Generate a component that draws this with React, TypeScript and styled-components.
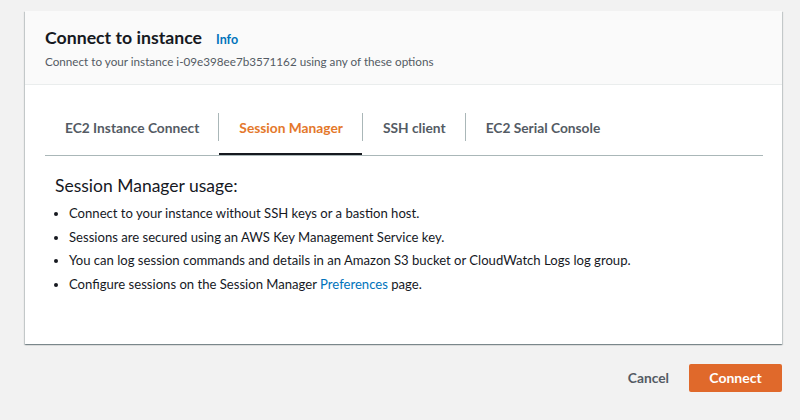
import React from "react"
import styled, { createGlobalStyle } from "styled-components"

const GlobalStyle = createGlobalStyle`
  html, body {
    margin: 0;
    padding: 0;
    background: #f2f2f2;
  }

  body {
    font-family: Lato, "Open Sans", sans-serif;
    color: #16191f;
  }
`

const Page = styled.div`
  width: 800px;
  height: 420px;
  box-sizing: border-box;
  padding: 11px 18px 0 25px;

  display: flex;
  flex-direction: column;
`

const Card = styled.section`
  width: 757px;
  background: #ffffff;
  box-shadow: 0 1px 1px 0 rgba(0, 28, 36, 0.3), 1px 1px 1px 0 rgba(0, 28, 36, 0.15), -1px 1px 1px 0 rgba(0, 28, 36, 0.15);
`

const Header = styled.header`
  height: 74px;
  box-sizing: border-box;
  padding: 16px 20px 0;

  background: #fafafa;
  border-bottom: 1px solid #eaeded;
`

const TitleRow = styled.div`
  display: flex;
  align-items: baseline;
  gap: 14px;
`

const Title = styled.h2`
  margin: 0;

  font-size: 17.7px;
  font-weight: 700;
  line-height: 22px;
`

const InfoLink = styled.a`
  font-size: 12.5px;
  font-weight: 700;
  color: #0073bb;
`

const Subtitle = styled.p`
  margin: 3px 0 0;

  font-size: 11.7px;
  line-height: 18px;
  color: #545b64;
`

const Body = styled.div`
  padding: 14px 19px 47px 20px;
`

const TabList = styled.div`
  display: flex;
  align-items: center;

  border-bottom: 1px solid #aab7b8;
`

const Tab = styled.button<{ $active?: boolean }>`
  height: 56px;
  padding: 0 19px 0 20px;

  border: none;
  background: none;
  box-shadow: ${ props => props.$active ? "inset 0 -2px 0 #16191f" : "none" };

  font-family: inherit;
  font-size: 13.75px;
  font-weight: 700;
  color: ${ props => props.$active ? "#e4782b" : "#545b64" };

  cursor: pointer;
`

const TabDivider = styled.span`
  width: 1px;
  height: 28px;
  background: #aab7b8;
`

const Content = styled.div`
  padding: 19px 10px 0;
`

const UsageTitle = styled.h3`
  margin: 0 0 5px;

  font-size: 17.5px;
  font-weight: 400;
  line-height: 22px;
`

const UsageList = styled.ul`
  margin: 0;
  padding-left: 14px;
`

const UsageItem = styled.li`
  font-size: 13.1px;
  line-height: 23.7px;
`

const Link = styled.a`
  color: #0073bb;
`

const Footer = styled.footer`
  display: flex;
  justify-content: flex-end;
  align-items: center;
  gap: 20px;

  width: 757px;
  margin-top: 20px;
`

const TextButton = styled.button`
  padding: 0;

  border: none;
  background: none;

  font-family: inherit;
  font-size: 13.8px;
  font-weight: 700;
  color: #545b64;
`

const PrimaryButton = styled.button`
  width: 93px;
  height: 28px;

  border: none;
  border-radius: 2px;
  background: #e0692b;

  font-family: inherit;
  font-size: 14px;
  font-weight: 700;
  color: #ffffff;
`

const tabs = ["EC2 Instance Connect", "Session Manager", "SSH client", "EC2 Serial Console"]

const App: React.FC = () => {
  return (
    <Page>
      <GlobalStyle />
      <Card>
        <Header>
          <TitleRow>
            <Title>Connect to instance</Title>
            <InfoLink>Info</InfoLink>
          </TitleRow>
          <Subtitle>Connect to your instance i-09e398ee7b3571162 using any of these options</Subtitle>
        </Header>

        <Body>
          <TabList>
            {tabs.map((label, i) => (
              <React.Fragment key={label}>
                {i > 0 && <TabDivider />}
                <Tab $active={label === "Session Manager"}>{label}</Tab>
              </React.Fragment>
            ))}
          </TabList>

          <Content>
            <UsageTitle>Session Manager usage:</UsageTitle>
            <UsageList>
              <UsageItem>Connect to your instance without SSH keys or a bastion host.</UsageItem>
              <UsageItem>Sessions are secured using an AWS Key Management Service key.</UsageItem>
              <UsageItem>You can log session commands and details in an Amazon S3 bucket or CloudWatch Logs log group.</UsageItem>
              <UsageItem>Configure sessions on the Session Manager <Link>Preferences</Link> page.</UsageItem>
            </UsageList>
          </Content>
        </Body>
      </Card>

      <Footer>
        <TextButton>Cancel</TextButton>
        <PrimaryButton>Connect</PrimaryButton>
      </Footer>
    </Page>
  )
}

export default App
